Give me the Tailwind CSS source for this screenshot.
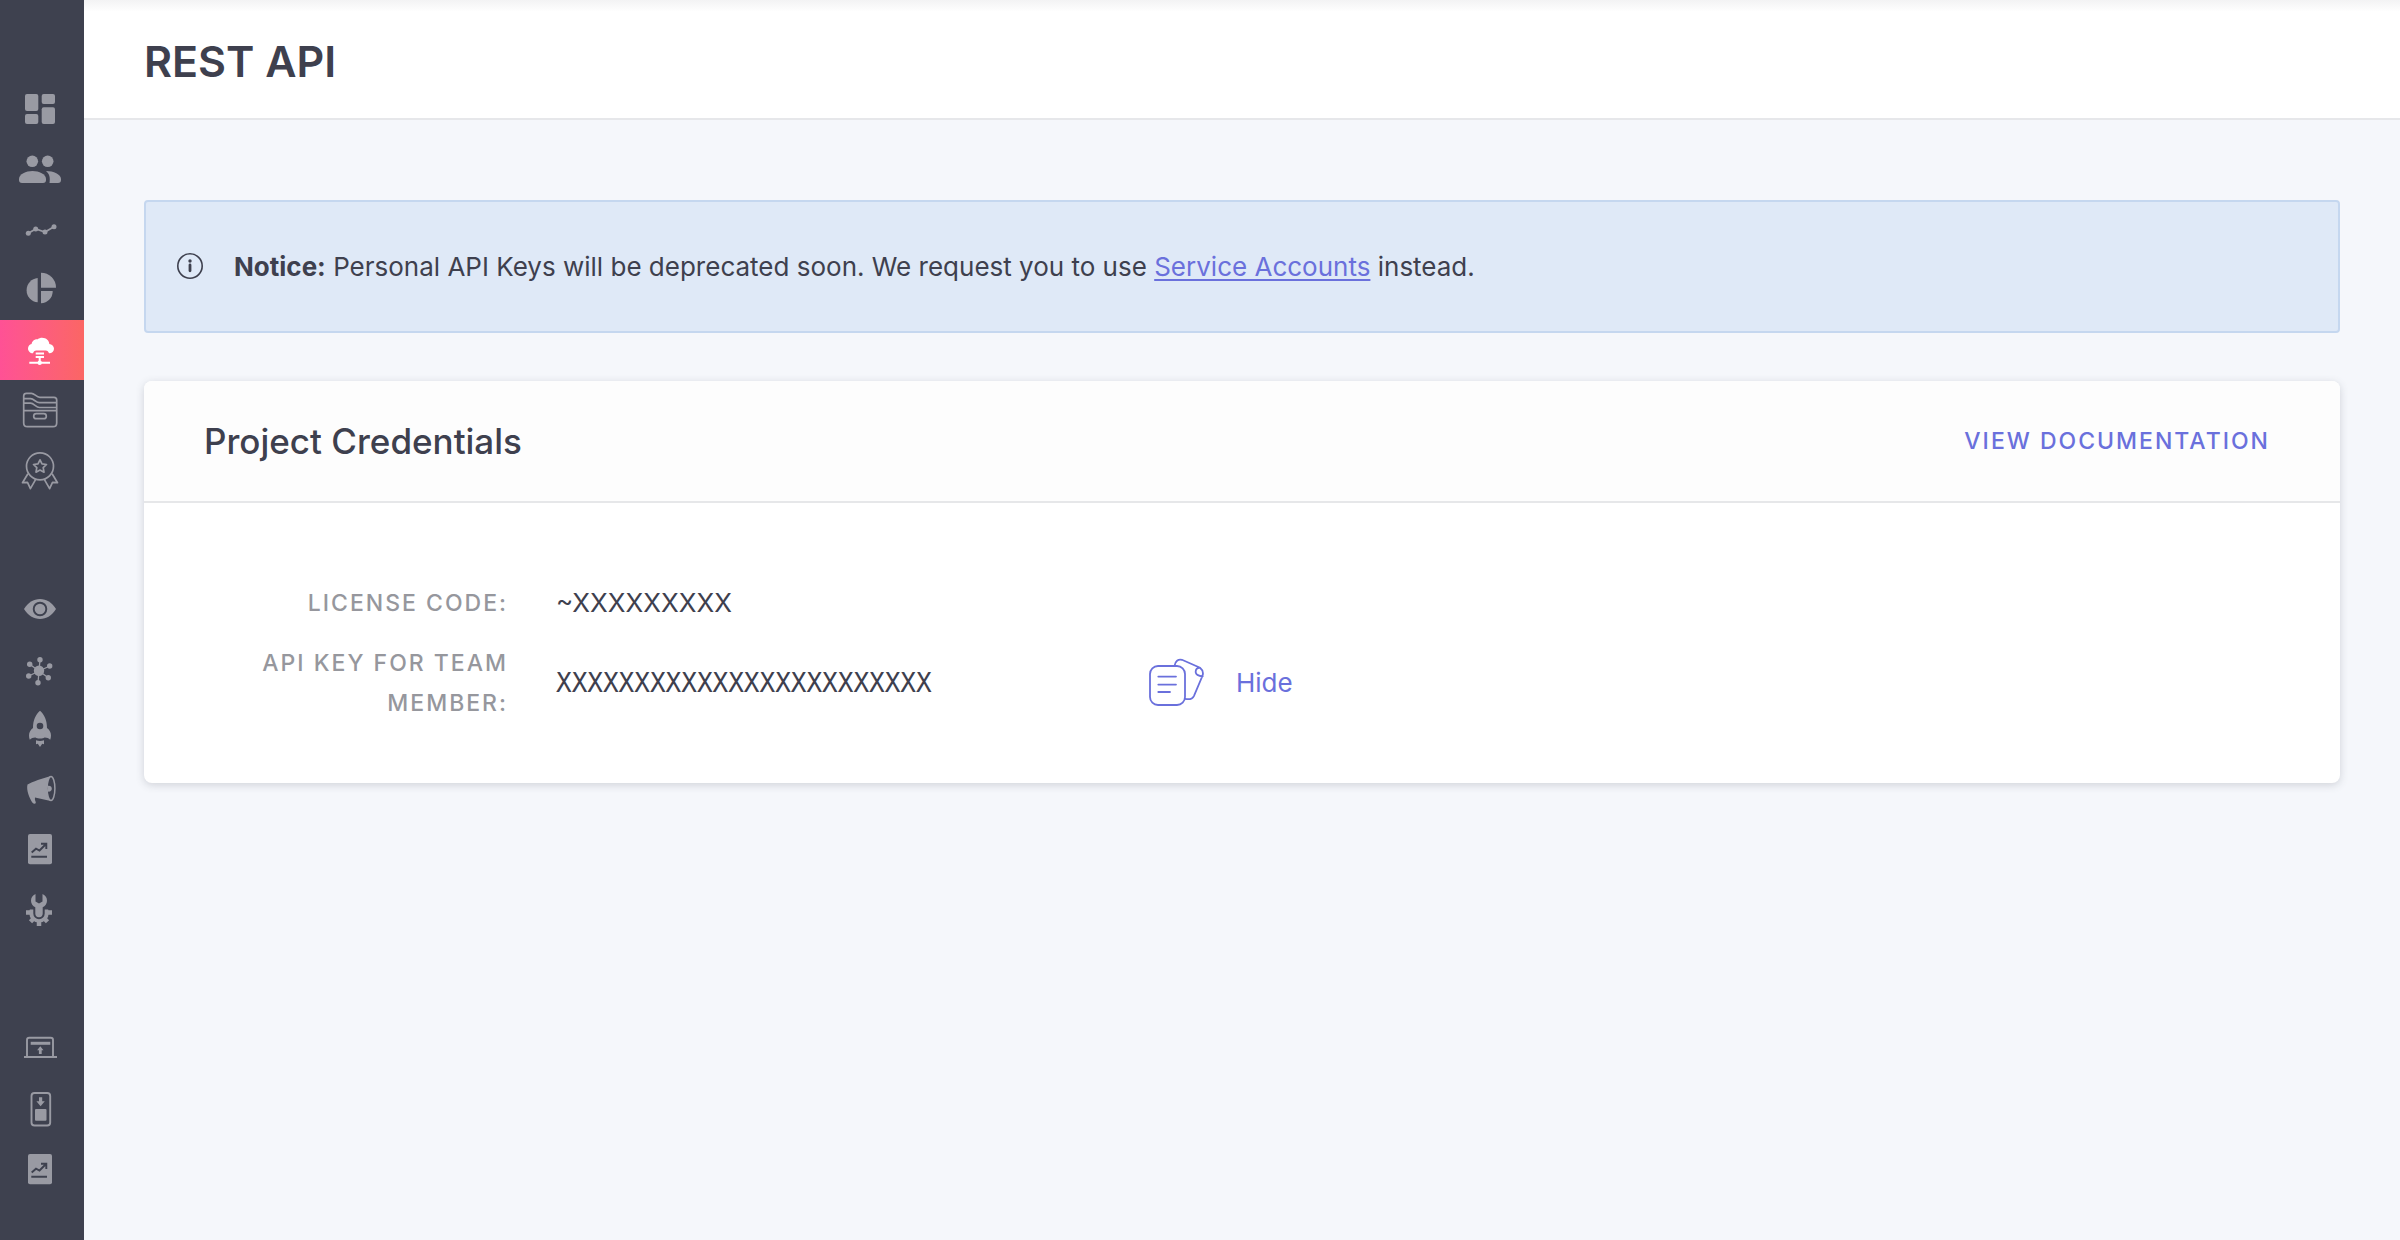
<!DOCTYPE html>
<html lang="en">
<head>
  <meta charset="UTF-8" />
  <meta name="viewport" content="width=device-width, initial-scale=1.0" />
  <title>REST API</title>
  <script src="https://cdn.jsdelivr.net/npm/@tailwindcss/browser@4"></script>
</head>
<body class="flex min-h-screen bg-[#f5f7fb] font-['Inter',sans-serif] text-[26px] text-[#3e404e]">

  <!-- Sidebar -->
  <nav aria-label="Main" class="flex w-[84px] shrink-0 flex-col gap-20 bg-[#3e414f] pt-20 text-[#999aa3]">
    <div>
      <a href="#" aria-label="Dashboard" class="flex h-15 items-center pl-4">
        <svg class="size-12" viewBox="0 0 48 48" fill="currentColor">
          <rect x="9" y="8" width="13.3" height="17" rx="2" /><rect x="25.7" y="8" width="13.3" height="10" rx="2" />
          <rect x="9" y="28" width="13.3" height="10" rx="2" /><rect x="25.7" y="21.3" width="13.3" height="16.7" rx="2" />
        </svg>
      </a>
      <a href="#" aria-label="Users" class="flex h-15 items-center pl-4">
        <svg class="size-12" viewBox="0 0 48 48" fill="currentColor">
          <circle cx="16.3" cy="15.3" r="5.8" /><circle cx="31.7" cy="15.3" r="5.8" />
          <path d="M3 33c0-5 7-8 13.500-8S30 28 30 33v1a3 3 0 0 1-3 3H6a3 3 0 0 1-3-3z" />
          <path d="M30 25c7.500 0 15 3.500 15 8v1a3 3 0 0 1-3 3h-8.500c.8-5 .2-9-3.500-12z" />
        </svg>
      </a>
      <a href="#" aria-label="Trends" class="flex h-15 items-center pl-4">
        <svg class="size-12" viewBox="0 0 48 48" fill="currentColor">
          <path d="M12.300 27.300 19.700 23 29 26l9-5.300" fill="none" stroke="currentColor" stroke-width="1.700" />
          <circle cx="12.300" cy="27.300" r="2.500" /><circle cx="19.700" cy="23" r="2.500" /><circle cx="29" cy="26" r="2.500" /><circle cx="38" cy="20.700" r="2.500" />
        </svg>
      </a>
      <a href="#" aria-label="Segments" class="flex h-15 items-center pl-4">
        <svg class="size-12" viewBox="0 0 48 48" fill="currentColor">
          <path d="M21.700 12v24.300a12.200 12.200 0 0 1 0-24.300z" />
          <path d="M25 6.700a15 15 0 0 1 15 15H25z" />
          <path d="M25 25h11.700A12 12 0 0 1 25 37.300z" />
        </svg>
      </a>
      <a href="#" aria-label="API" aria-current="page" class="flex h-15 items-center bg-linear-to-r from-[#ff5195] to-[#fb6664] pl-4 text-white">
        <svg class="size-12" viewBox="0 0 48 48" fill="currentColor">
          <path d="M17 27.300c-3 0-5-2.300-5-4.800 0-2.200 1.500-4 3.600-4.500.2-3 3-5.300 6.200-4.800 1-1 2.800-1.500 4.200-1.500 4.300 0 7.300 3 7.300 6.300 2.600.3 4.700 2.300 4.700 4.800 0 2.700-2 4.500-5 4.500-.5-1.800-1.500-2.900-3.400-2.900H20.300c-1.800 0-2.800 1.100-3.300 2.900z" />
          <path d="M19.700 27.500H28M19.700 31H28M23.700 31v6M13.300 36.700H34" fill="none" stroke="currentColor" stroke-width="2" />
          <circle cx="23.700" cy="36.700" r="2.200" />
        </svg>
      </a>
      <a href="#" aria-label="Files" class="flex h-15 items-center pl-4">
        <svg class="size-12" viewBox="0 0 48 48" fill="none" stroke="currentColor" stroke-width="1.700" stroke-linejoin="round">
          <path d="M7.700 24.700V10c0-2 1-2.700 2.700-2.700h5c3 0 5 4 8.500 4H38c2 0 2.700 1 2.700 2.700V37c0 2.500-1.500 3.700-3.700 3.700H11.500c-2.300 0-3.800-1.200-3.800-3.700V24.700h33" />
          <path d="M8 12.700h6.500c3.500 0 5.500 4 9 4h17M8 17.200h6.500c3.500 0 5.500 4.300 9 4.300h17" />
          <rect x="17.700" y="27.700" width="12.600" height="5" rx="2.500" />
        </svg>
      </a>
      <a href="#" aria-label="Achievements" class="flex h-15 items-center pl-4">
        <svg class="size-12" viewBox="0 0 48 48" fill="none" stroke="currentColor" stroke-width="1.700" stroke-linejoin="round">
          <circle cx="24" cy="20.300" r="13.500" />
          <path d="m24 13.800 2 4.100 4.500.6-3.300 3.200.8 4.500-4-2.100-4 2.100.8-4.500-3.300-3.200 4.500-.6z" />
          <path d="m11.900 27.800-5.400 8.900 5-.4 2.900 6.400 5.300-9.300M36.100 27.800l5.400 8.900-5-.4-2.900 6.400-5.300-9.300" />
        </svg>
      </a>
    </div>

    <div>
      <a href="#" aria-label="Preview" class="flex h-15 items-center pl-4">
        <svg class="size-12" viewBox="0 0 48 48" fill="currentColor">
          <path d="M8 23c4-6.500 9.500-10 16-10s12 3.500 16 10c-4 6.500-9.500 10-16 10S12 29.500 8 23z" />
          <circle cx="24" cy="23" r="6.300" stroke="#3e414f" stroke-width="1.900" />
        </svg>
      </a>
      <a href="#" aria-label="Integrations" class="flex h-15 items-center pl-4">
        <svg class="size-12" viewBox="0 0 48 48" fill="currentColor">
          <path d="m24 13.700-2 23M33.700 20l-21 10M32.300 31.700l-18.600-13.400" fill="none" stroke="currentColor" stroke-width="1.300" />
          <circle cx="23" cy="24.700" r="5.200" />
          <circle cx="24" cy="13.700" r="2.700" /><circle cx="33.700" cy="20" r="2.700" /><circle cx="32.300" cy="31.700" r="2.700" />
          <circle cx="22" cy="36.700" r="2.700" /><circle cx="12.700" cy="30" r="2.700" /><circle cx="13.700" cy="18.300" r="2.700" />
        </svg>
      </a>
      <a href="#" aria-label="Launch" class="flex h-15 items-center pl-4">
        <svg class="size-12" viewBox="0 0 48 48" fill="currentColor">
          <path fill-rule="evenodd" d="M24 4.700c4.500 4 7 9.500 7 17.300 2.700 2 4 4.500 4 7.500 0 1.600-.3 3-.8 4.200-1.600-1.700-3.500-2.400-5.700-2.300-1 .8-2 1-4.500 1s-3.500-.2-4.500-1c-2.200-.1-4.100.6-5.700 2.300-.5-1.200-.8-2.600-.8-4.200 0-3 1.300-5.500 4-7.500 0-7.800 2.500-13.300 7-17.300zm0 12a3.300 3.300 0 1 0 0 6.600 3.300 3.300 0 0 0 0-6.600z" />
          <path d="M20 34.300c2.500 1 5.500 1 8 0v4l-1.800-.5L24 41l-2.200-3.200-1.800.5z" />
        </svg>
      </a>
      <a href="#" aria-label="Campaigns" class="flex h-15 items-center pl-4">
        <svg class="size-12" viewBox="0 0 48 48" fill="currentColor">
          <path d="M11.500 18.500c5-3 15-6 23.200-8.500v25L19 31.500c-.6 2.600 1 4 .8 5.500-.5 1.200-2.300 1-3.300-.3C13.500 32.500 10 24 11.500 18.500z" />
          <ellipse cx="35" cy="22.500" rx="3.900" ry="12" fill="#3e414f" stroke="currentColor" stroke-width="1.500" />
          <path d="M32 19.800c2.400-.3 3.800 1 3.800 2.900s-1.400 3.200-3.800 2.900z" />
        </svg>
      </a>
      <a href="#" aria-label="Reports" class="flex h-15 items-center pl-4">
        <svg class="size-12" viewBox="0 0 48 48" fill="none" stroke="#3e414f" stroke-width="1.900">
          <rect x="12" y="8" width="24" height="30.300" rx="2" fill="#999aa3" stroke="none" />
          <path d="m15.700 26.500 4.300-3.800 3.500 1.800L30 18M25 17.800h5.300V23M15.300 30.700H31" />
        </svg>
      </a>
      <a href="#" aria-label="Settings" class="flex h-15 items-center pl-4">
        <svg class="size-12" viewBox="0 0 48 48" fill="currentColor">
          <circle cx="23" cy="26.800" r="9.800" />
          <path d="M23 27v13M23 27l-8.500 8.700M23 27l8.500 8.700M10 26.500h26" fill="none" stroke="currentColor" stroke-width="4.500" />
          <path d="M9 5h28v18.500H9z" fill="#3e414f" />
          <path d="M19.300 22h7.400v5.500a3.700 3.700 0 0 1-7.400 0z" stroke="#3e414f" stroke-width="4" />
          <path d="M19.500 8v7.500l3.500 2 3.500-2V8c3 1.200 4.500 3.800 4.500 6.700 0 3-1.800 5.300-4.300 6.500v6.300a3.700 3.700 0 0 1-7.400 0v-6.300c-2.500-1.200-4.300-3.500-4.300-6.500 0-2.900 1.500-5.500 4.500-6.700z" />
        </svg>
      </a>
    </div>

    <div>
      <a href="#" aria-label="Web push" class="flex h-15 items-center pl-4">
        <svg class="size-12" viewBox="0 0 48 48" fill="none" stroke="currentColor" stroke-width="1.900">
          <path d="M11 30.500V14c0-1.500.8-2.300 2.300-2.300h21.400c1.500 0 2.300.8 2.300 2.300v16.500M8 31h33" />
          <path d="M14.700 17.300h19.600" stroke-width="3" />
          <path d="m24.300 20.300 3.200 4h-1.800v3.700h-2.800v-3.700h-1.800z" fill="currentColor" stroke="none" />
        </svg>
      </a>
      <a href="#" aria-label="App install" class="flex h-15 items-center pl-4">
        <svg class="size-12" viewBox="0 0 48 48" fill="currentColor">
          <rect x="15.500" y="7" width="18.700" height="32.500" rx="3" fill="none" stroke="currentColor" stroke-width="1.900" />
          <path d="M23 11.300h3.200v4h2.600L24.600 20.300l-4.200-5H23z" />
          <rect x="19" y="23" width="11.500" height="11.700" rx="1" />
        </svg>
      </a>
      <a href="#" aria-label="App reports" class="flex h-15 items-center pl-4">
        <svg class="size-12" viewBox="0 0 48 48" fill="none" stroke="#3e414f" stroke-width="1.900">
          <rect x="12" y="8" width="24" height="30.300" rx="2" fill="#999aa3" stroke="none" />
          <path d="m15.700 26.500 4.300-3.800 3.500 1.800L30 18M25 17.800h5.300V23M15.300 30.700H31" />
        </svg>
      </a>
    </div>
  </nav>

  <div class="min-w-0 flex-1">
    <header class="border-b-2 border-[#e6e7ea] bg-white bg-linear-to-b from-[#f3f3f4] to-white to-10% px-15 pt-[34px] pb-[30px]">
      <h1 class="text-[43px] leading-[54px] font-semibold">REST API</h1>
    </header>

    <main class="px-15 py-20">
      <!-- Deprecation notice -->
      <div role="status" class="flex items-center gap-[30px] rounded border-2 border-[#c5d7ef] bg-[#dfe9f7] px-[30px] py-11">
        <svg class="size-7 shrink-0" viewBox="0 0 28 28" fill="none" stroke="currentColor" stroke-width="1.600">
          <circle cx="14" cy="13" r="12.200" />
          <path d="M14 12v5.800" stroke-width="2.800" stroke-linecap="round" />
          <circle cx="14" cy="8" r="1.700" fill="currentColor" stroke="none" />
        </svg>
        <p class="leading-[41px]"><strong class="font-bold">Notice:</strong> Personal API Keys will be deprecated soon. We request you to use <a href="#" class="text-[#6a70dc] underline decoration-2 underline-offset-3">Service Accounts</a> instead.</p>
      </div>

      <!-- Credentials card -->
      <section class="mt-12 rounded-lg bg-white shadow-[0_2px_8px_rgba(60,64,80,0.2)]">
        <div class="flex items-center justify-between rounded-t-lg border-b-2 border-[#e6e7e9] bg-[#fdfdfd] py-9 pr-[70px] pl-15">
          <h2 class="text-[35px] leading-12 font-medium">Project Credentials</h2>
          <a href="#" class="text-[23px] font-medium tracking-[2px] text-[#6a70dc]">VIEW DOCUMENTATION</a>
        </div>
        <dl class="space-y-5 px-15 pt-20 pb-15 leading-10">
          <div class="grid grid-cols-[304px_544px_1fr] items-center gap-12">
            <dt class="text-right text-[23px] font-medium tracking-[2px] text-[#96979d]">LICENSE CODE:</dt>
            <dd>~XXXXXXXXX</dd>
          </div>
          <div class="grid grid-cols-[304px_544px_1fr] items-center gap-12">
            <dt class="text-right text-[23px] font-medium tracking-[2px] text-[#96979d]">API KEY FOR TEAM MEMBER:</dt>
            <dd class="font-['DejaVu_Sans_Mono',monospace]">XXXXXXXXXXXXXXXXXXXXXXXX</dd>
            <dd class="flex items-center gap-8 text-[#6a70dc]">
              <button type="button" aria-label="Copy API key">
                <svg class="h-[52px] w-14" viewBox="0 0 56 52" fill="none" stroke="currentColor" stroke-width="1.800" stroke-linecap="round">
                  <rect x="2" y="9" width="35" height="39" rx="8" />
                  <path d="M10.300 19.600H28M10.300 27.600H28M10.300 35H22" />
                  <path d="M26.500 8.800c.8-4.500 3.500-7 7.500-6l18 8c2.500 2 3.500 5 2.500 8L46 38.800c-1.500 3-4.500 4-8.800 3M52 10.800c-3-.5-4.500 2-4.300 4.500.3 2.500 3 3.500 7 4" />
                </svg>
              </button>
              <button type="button">Hide</button>
            </dd>
          </div>
        </dl>
      </section>
    </main>
  </div>

</body>
</html>
